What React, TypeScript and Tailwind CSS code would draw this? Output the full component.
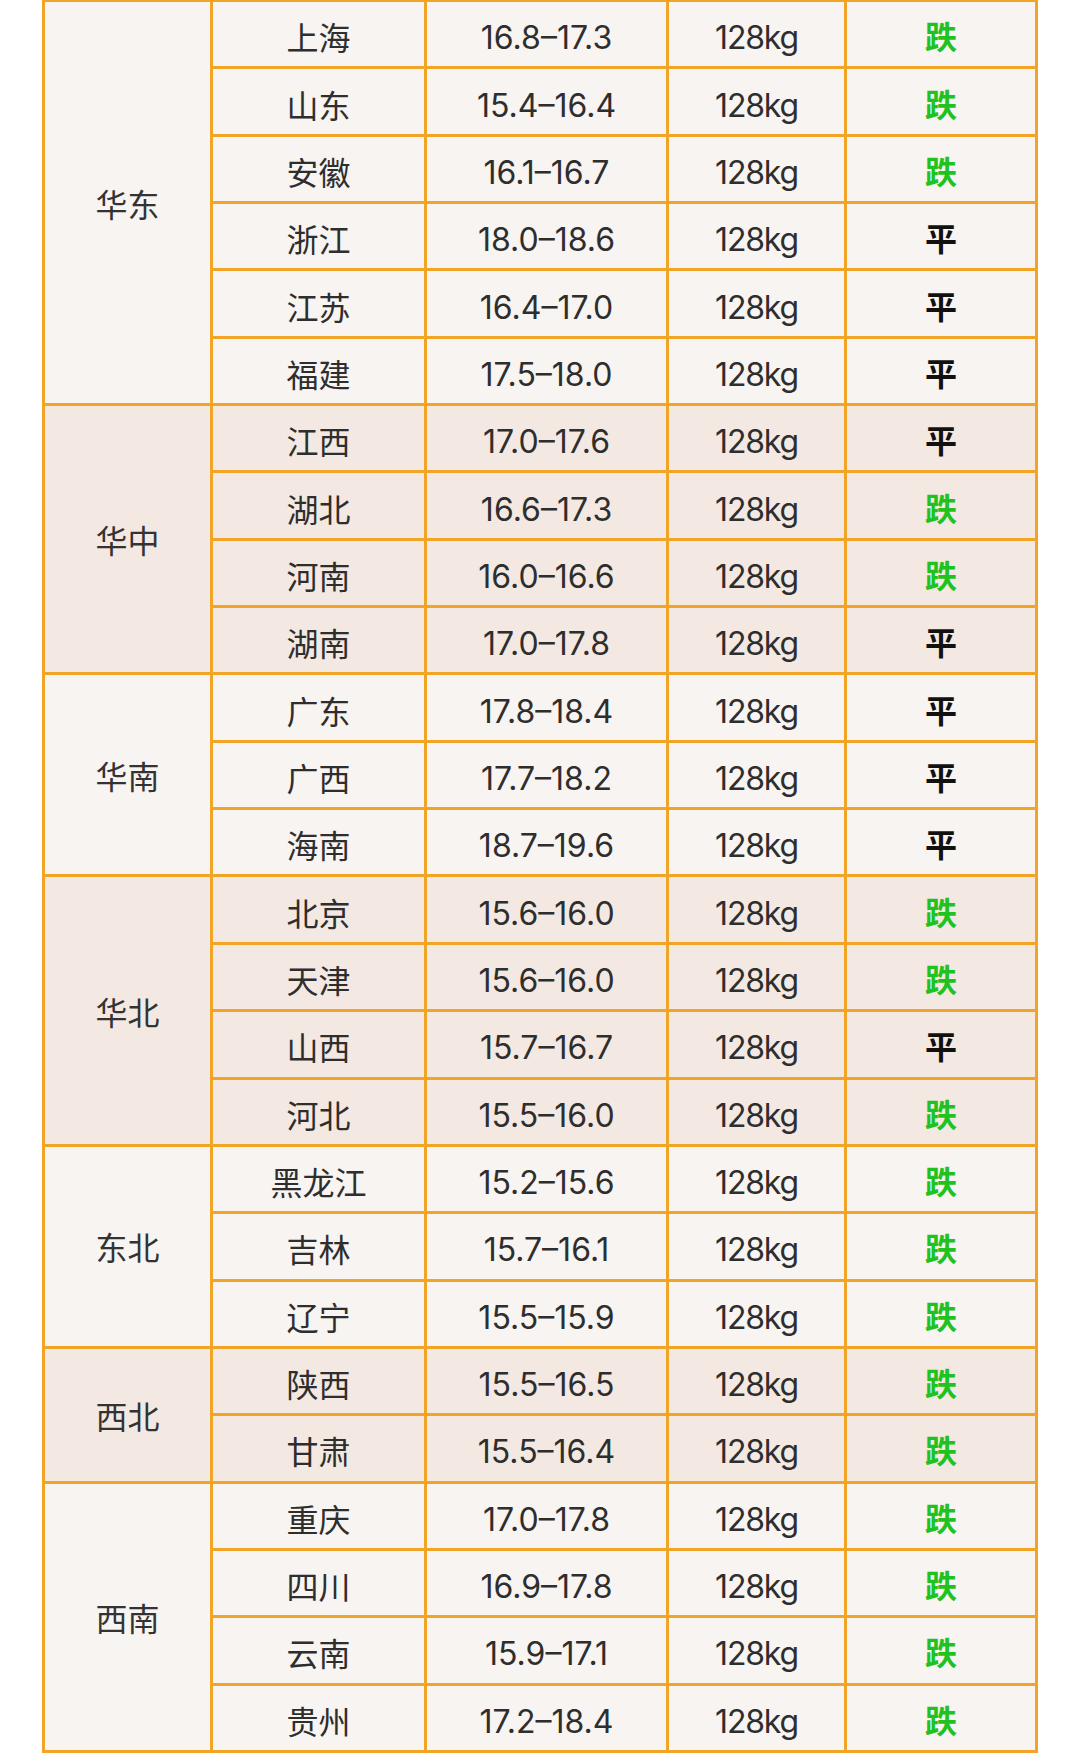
import React from "react";

type Row = { p: string; price: string; t: "跌" | "平" };
type Section = { name: string; dark: boolean; rows: Row[] };

const sections: Section[] = [
  {
    name: "华东",
    dark: false,
    rows: [
      { p: "上海", price: "16.8–17.3", t: "跌" },
      { p: "山东", price: "15.4–16.4", t: "跌" },
      { p: "安徽", price: "16.1–16.7", t: "跌" },
      { p: "浙江", price: "18.0–18.6", t: "平" },
      { p: "江苏", price: "16.4–17.0", t: "平" },
      { p: "福建", price: "17.5–18.0", t: "平" },
    ],
  },
  {
    name: "华中",
    dark: true,
    rows: [
      { p: "江西", price: "17.0–17.6", t: "平" },
      { p: "湖北", price: "16.6–17.3", t: "跌" },
      { p: "河南", price: "16.0–16.6", t: "跌" },
      { p: "湖南", price: "17.0–17.8", t: "平" },
    ],
  },
  {
    name: "华南",
    dark: false,
    rows: [
      { p: "广东", price: "17.8–18.4", t: "平" },
      { p: "广西", price: "17.7–18.2", t: "平" },
      { p: "海南", price: "18.7–19.6", t: "平" },
    ],
  },
  {
    name: "华北",
    dark: true,
    rows: [
      { p: "北京", price: "15.6–16.0", t: "跌" },
      { p: "天津", price: "15.6–16.0", t: "跌" },
      { p: "山西", price: "15.7–16.7", t: "平" },
      { p: "河北", price: "15.5–16.0", t: "跌" },
    ],
  },
  {
    name: "东北",
    dark: false,
    rows: [
      { p: "黑龙江", price: "15.2–15.6", t: "跌" },
      { p: "吉林", price: "15.7–16.1", t: "跌" },
      { p: "辽宁", price: "15.5–15.9", t: "跌" },
    ],
  },
  {
    name: "西北",
    dark: true,
    rows: [
      { p: "陕西", price: "15.5–16.5", t: "跌" },
      { p: "甘肃", price: "15.5–16.4", t: "跌" },
    ],
  },
  {
    name: "西南",
    dark: false,
    rows: [
      { p: "重庆", price: "17.0–17.8", t: "跌" },
      { p: "四川", price: "16.9–17.8", t: "跌" },
      { p: "云南", price: "15.9–17.1", t: "跌" },
      { p: "贵州", price: "17.2–18.4", t: "跌" },
    ],
  },
];

const spanClass: Record<number, string> = {
  2: "row-span-2",
  3: "row-span-3",
  4: "row-span-4",
  6: "row-span-6",
};

export default function App() {
  return (
    <div className="w-[1080px] h-[1753px] overflow-hidden bg-white">
      <div className="ml-[42px] mt-[-1px] w-[996px] h-[1754px] bg-[#f2a426] p-[3px] grid gap-[3px] grid-cols-[165px_211px_239px_175px_188px] grid-rows-[repeat(26,minmax(0,1fr))] text-[32px] leading-none text-[#2e2e2e] font-['Inter','Noto_Sans_CJK_SC',sans-serif]">
        {sections.map((s) => {
          const bg = s.dark ? "bg-[#f3e9e2]" : "bg-[#f8f4f1]";
          return (
            <React.Fragment key={s.name}>
              <div
                className={`${spanClass[s.rows.length]} ${bg} flex items-center justify-center pt-[6px] text-[#333333]`}
              >
                {s.name}
              </div>
              {s.rows.map((r) => (
                <React.Fragment key={r.p}>
                  <div className={`col-start-2 ${bg} flex items-center justify-center pt-[10px]`}>
                    {r.p}
                  </div>
                  <div className={`${bg} flex items-center justify-center pt-[8px]`}>
                    {r.price}
                  </div>
                  <div className={`${bg} flex items-center justify-center pt-[8px] tracking-[-1.2px]`}>
                    128kg
                  </div>
                  <div
                    className={`${bg} flex items-center justify-center pt-[8px] font-bold ${
                      r.t === "跌" ? "text-[#1fc21f]" : "text-[#111111]"
                    }`}
                  >
                    {r.t}
                  </div>
                </React.Fragment>
              ))}
            </React.Fragment>
          );
        })}
      </div>
    </div>
  );
}
